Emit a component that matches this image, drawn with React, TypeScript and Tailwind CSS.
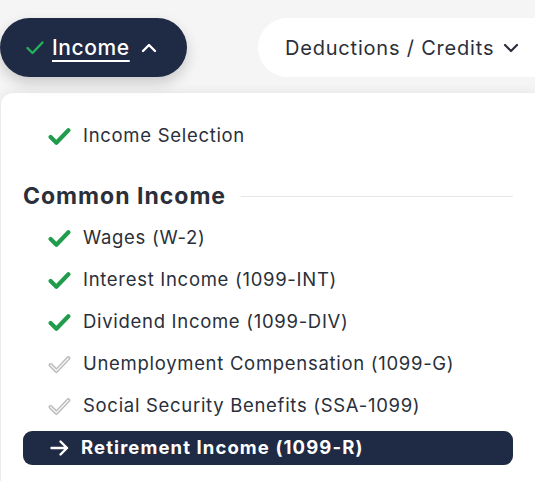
import React from "react";

const font = { fontFamily: "Inter, 'Open Sans', sans-serif" };

const items = [
  { label: "Wages (W-2)", done: true },
  { label: "Interest Income (1099-INT)", done: true },
  { label: "Dividend Income (1099-DIV)", done: true },
  { label: "Unemployment Compensation (1099-G)", done: false },
  { label: "Social Security Benefits (SSA-1099)", done: false },
];

function GreenCheck() {
  return (
    <svg width="23" height="19" viewBox="0 0 22 18" className="shrink-0">
      <path
        d="M2.5 9.5 L8 15 L19.5 3"
        fill="none"
        stroke="#1f9d4c"
        strokeWidth="4"
        strokeLinecap="round"
        strokeLinejoin="round"
      />
    </svg>
  );
}

function GrayCheck() {
  return (
    <svg width="23" height="19" viewBox="0 0 22 18" className="shrink-0">
      <path
        d="M2.5 9.5 L8 15 L19.5 3"
        fill="none"
        stroke="#b8b8b8"
        strokeWidth="3.8"
        strokeLinecap="round"
        strokeLinejoin="round"
      />
      <path
        d="M2.5 9.5 L8 15 L19.5 3"
        fill="none"
        stroke="#f4f4f4"
        strokeWidth="1.4"
        strokeLinecap="round"
        strokeLinejoin="round"
      />
    </svg>
  );
}

function Row({ label, done }: { label: string; done: boolean }) {
  return (
    <div className="flex h-[42px] items-center gap-[12px] pl-[25px]">
      {done ? <GreenCheck /> : <GrayCheck />}
      <span className="text-[18.5px] tracking-[0.7px] text-[#2a2f3a]">{label}</span>
    </div>
  );
}

export default function App() {
  return (
    <div className="relative h-[481px] w-[535px] overflow-hidden bg-[#f5f5f5]" style={font}>
      <div className="flex pt-[18px]">
        <div className="flex h-[59px] w-[187px] items-center rounded-full bg-[#1f2a44] pl-[26px] shadow-[0_6px_14px_rgba(0,0,0,0.18)]">
          <svg width="18" height="14" viewBox="0 0 18 14">
            <path
              d="M1.5 7 L6.5 12 L16.5 1.5"
              fill="none"
              stroke="#26b05a"
              strokeWidth="2.4"
              strokeLinecap="round"
              strokeLinejoin="round"
            />
          </svg>
          <span className="ml-[8px] text-[21px] font-medium tracking-[0.6px] text-white underline decoration-2 underline-offset-[5px]">
            Income
          </span>
          <svg width="16" height="10" viewBox="0 0 16 10" className="ml-[11px]">
            <path
              d="M2 8 L8 2 L14 8"
              fill="none"
              stroke="#ffffff"
              strokeWidth="2.4"
              strokeLinecap="round"
              strokeLinejoin="round"
            />
          </svg>
        </div>
        <div className="ml-[71px] flex h-[59px] flex-1 items-center rounded-l-full bg-white pl-[27px]">
          <span className="text-[20px] tracking-[0.8px] text-[#2a2f3a]">Deductions / Credits</span>
          <svg width="16" height="10" viewBox="0 0 16 10" className="ml-[9px]">
            <path
              d="M2 2 L8 8 L14 2"
              fill="none"
              stroke="#2a2f3a"
              strokeWidth="2.2"
              strokeLinecap="round"
              strokeLinejoin="round"
            />
          </svg>
        </div>
      </div>

      <div className="mt-[16px] ml-[1px] h-[400px] rounded-tl-[12px] bg-white px-[22px] pt-[22px] shadow-[0_0_12px_rgba(0,0,0,0.08)]">
        <Row label="Income Selection" done={true} />
        <div className="mt-[18px] flex h-[42px] items-center gap-[15px]">
          <span className="text-[23px] font-bold tracking-[1px] text-[#2a2f3a]">Common Income</span>
          <div className="h-px flex-1 bg-[#e6e6e6]" />
        </div>
        {items.map((it) => (
          <Row key={it.label} label={it.label} done={it.done} />
        ))}
        <div className="flex h-[42px] items-center">
          <div className="flex h-[34px] flex-1 items-center gap-[12px] rounded-[9px] bg-[#1f2a44] pl-[27px]">
            <svg width="19" height="16" viewBox="0 0 19 16" className="shrink-0">
              <path
                d="M1.5 8 H17 M10.5 1.5 L17 8 L10.5 14.5"
                fill="none"
                stroke="#ffffff"
                strokeWidth="2.4"
                strokeLinecap="round"
                strokeLinejoin="round"
              />
            </svg>
            <span className="text-[18.5px] font-bold tracking-[1.1px] text-white">
              Retirement Income (1099-R)
            </span>
          </div>
        </div>
      </div>
    </div>
  );
}
